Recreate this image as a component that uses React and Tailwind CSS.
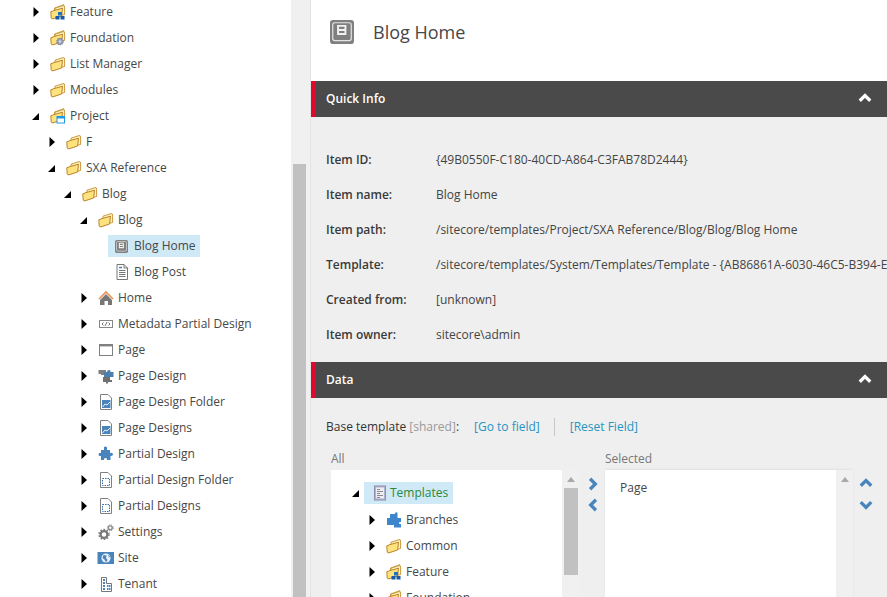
import React from "react";

const Right = () => (
  <svg width="6" height="10" viewBox="0 0 6 10" className="shrink-0"><path d="M0.5 0 L6 5 L0.5 10Z" fill="#000" /></svg>
);
const Down = () => (
  <svg width="7" height="7" viewBox="0 0 7 7" className="shrink-0"><path d="M7 0 V7 H0Z" fill="#000" /></svg>
);

const FolderBase = ({ children, back }) => (
  <svg width="16" height="16" viewBox="0 0 16 16" className="shrink-0">
    {back && <path d="M4.5 4 L8.5 2.6 V5 L4.5 6Z M9 2.4 L13.8 0.6 V6 H9Z" fill="#fdf0b4" stroke="#c08a2a" strokeWidth="0.8" />}
    <path d="M5 4.2 L13 1.6 Q14.6 1.4 14.6 3 V10.5 L5 13Z" fill="#fdf2c0" stroke="#c4902e" strokeWidth="0.9" />
    <path d="M0.8 7.8 L4 6.6 L12.5 4.2 L11.6 12 L3 14.8 Q1.4 15 1.2 14Z" fill="#fde27e" stroke="#bb842a" strokeWidth="1" />
    {children}
  </svg>
);
const Folder = () => <FolderBase />;
const FolderCubes = () => (
  <FolderBase back>
    <rect x="8" y="8" width="4" height="3.5" fill="#1f6fc4" />
    <rect x="5.5" y="12" width="4" height="3.5" fill="#155aa8" />
    <rect x="10.5" y="12" width="4" height="3.5" fill="#155aa8" />
  </FolderBase>
);
const FolderGear = () => (
  <FolderBase back>
    <circle cx="10" cy="11.5" r="3.2" fill="#9aa0b8" stroke="#7a8098" strokeWidth="1.2" strokeDasharray="1.2 0.8" />
    <circle cx="10" cy="11.5" r="1.2" fill="#d4d7e2" />
  </FolderBase>
);
const FolderWindow = () => (
  <FolderBase back>
    <rect x="7" y="8.5" width="7.5" height="6.5" fill="#fff" stroke="#1e9be8" strokeWidth="1" />
    <rect x="7" y="8.5" width="7.5" height="2" fill="#1e9be8" />
  </FolderBase>
);
const KeyB = ({ s = 13 }) => (
  <svg width={s} height={s} viewBox="0 0 14 14" className="shrink-0">
    <rect x="0" y="0" width="14" height="14" rx="1.8" fill="#808080" />
    <rect x="1.6" y="1.6" width="10.8" height="10.4" rx="1.2" fill="none" stroke="#e4e4e4" strokeWidth="0.7" />
    <path d="M4.7 3.4 H9 V8.2 H4.7Z M4.7 5.8 H9" fill="none" stroke="#f2f2f2" strokeWidth="1.1" />
  </svg>
);
const Doc = () => (
  <svg width="16" height="16" viewBox="0 0 16 16" className="shrink-0">
    <path d="M3 0.5 H10 L13.5 4 V15.5 H3Z" fill="#fff" stroke="#777" />
    <path d="M10 0.5 V4 H13.5" fill="none" stroke="#777" />
    <path d="M5 6.5 H11.5 M5 8.5 H11.5 M5 10.5 H11.5 M5 12.5 H11.5" stroke="#777" />
    <path d="M5 3.5 H8" stroke="#4a86c0" strokeWidth="1.6" />
  </svg>
);
const HomeI = () => (
  <svg width="16" height="16" viewBox="0 0 16 16" className="shrink-0">
    <path d="M8 4 L14 10 V15 H10 V11 H6.5 V15 H2 V10Z" fill="#777" />
    <path d="M1 9 L8 2 L15 9" fill="none" stroke="#e8945a" strokeWidth="1.7" />
  </svg>
);
const Meta = () => (
  <svg width="16" height="16" viewBox="0 0 16 16" className="shrink-0">
    <rect x="1.5" y="4.5" width="13" height="7" fill="#fff" stroke="#888" />
    <path d="M5.5 6.5 L4 8 L5.5 9.5 M10.5 6.5 L12 8 L10.5 9.5 M7 10 L9 6" fill="none" stroke="#666" strokeWidth="0.9" />
  </svg>
);
const PageI = () => (
  <svg width="16" height="16" viewBox="0 0 16 16" className="shrink-0">
    <rect x="1.5" y="2.5" width="13" height="11" fill="#fff" stroke="#808080" />
    <rect x="1" y="2" width="14" height="2.4" fill="#808080" />
  </svg>
);
const Puzzle = ({ c = "#4a84bd" }) => (
  <svg width="16" height="16" viewBox="0 0 16 16" className="shrink-0">
    <path d="M6 1 Q8 0 9 1.5 L9 4 H12 V7 Q14 6 15 8 Q15 10.5 12.5 10 L12.5 14 H9 Q9.5 12 7.5 12 Q5.5 12 6 14 H3 V10 Q0.5 10.5 0.5 8.2 Q1 6 3 7 V4 H6Z" fill={c} />
  </svg>
);
const PageDesign = () => (
  <svg width="16" height="16" viewBox="0 0 16 16" className="shrink-0">
    <path d="M0.5 2 H8 V4 H6 V7 H3 V6 H0.5Z" fill="#808080" />
    <path d="M6 4 H9 Q9 2 11 2 Q13 2 12.5 4 H15.5 V9 H6Z" fill="#4a7fb0" />
    <path d="M5 9 H12 V12 H14 V14 H10 V15.5 H8 V14 H5Z" fill="#707070" />
  </svg>
);
const Chart = () => (
  <svg width="16" height="16" viewBox="0 0 16 16" className="shrink-0">
    <path d="M2.5 0.5 H10 L13.5 4 V15.5 H2.5Z" fill="#fff" stroke="#808080" />
    <rect x="4" y="6" width="8.5" height="8" fill="#4a84bd" />
    <path d="M4.5 13 L7 10 L9 11 L12 8" fill="none" stroke="#fff" strokeWidth="0.9" />
  </svg>
);
const Dotted = () => (
  <svg width="16" height="16" viewBox="0 0 16 16" className="shrink-0">
    <path d="M2.5 0.5 H10 L13.5 4 V15.5 H2.5Z" fill="#fff" stroke="#808080" />
    <rect x="4.5" y="6.5" width="7" height="7" fill="none" stroke="#2f6fb0" strokeDasharray="1.5 1" />
  </svg>
);
const Gears = () => (
  <svg width="16" height="16" viewBox="0 0 16 16" className="shrink-0">
    <circle cx="6" cy="10.5" r="3.4" fill="none" stroke="#777" strokeWidth="2.2" />
    <circle cx="6" cy="10.5" r="5" fill="none" stroke="#777" strokeWidth="1.4" strokeDasharray="1.6 1.6" />
    <circle cx="12.3" cy="3.8" r="1.9" fill="none" stroke="#8a8a8a" strokeWidth="1.4" />
    <circle cx="12.3" cy="3.8" r="3" fill="none" stroke="#8a8a8a" strokeWidth="1" strokeDasharray="1.2 1.2" />
  </svg>
);
const Site = () => (
  <svg width="16" height="16" viewBox="0 0 16 16" className="shrink-0 overflow-visible">
    <rect x="-0.5" y="2" width="16.5" height="12" fill="#4a84bd" />
    <circle cx="8" cy="8" r="4.6" fill="#e8f0f8" />
    <path d="M5.5 5 L8.5 5.5 L8 8 L9.5 10 L8 12.2 L6.5 9.5 L4.5 8Z M10 4.5 L12 6.5 L11 7.5Z" fill="#4a84bd" />
  </svg>
);
const Tenant = () => (
  <svg width="16" height="16" viewBox="0 0 16 16" className="shrink-0">
    <path d="M3.5 1.5 H8.5 V7.5 H13.5 V15.5 H3.5Z" fill="#fff" stroke="#777" />
    <rect x="5" y="3" width="2" height="2" fill="#4a84bd" />
    <rect x="5" y="6" width="2" height="2" fill="#4a84bd" />
    <rect x="5" y="9" width="2" height="2" fill="#4a84bd" />
    <rect x="5" y="12" width="2" height="2" fill="#4a84bd" />
    <rect x="9" y="9" width="1.5" height="2" fill="#4a84bd" />
    <rect x="11" y="9" width="1.5" height="2" fill="#4a84bd" />
    <rect x="9" y="12" width="1.5" height="2" fill="#4a84bd" />
    <rect x="11" y="12" width="1.5" height="2" fill="#4a84bd" />
  </svg>
);
const TemplatesI = () => (
  <svg width="16" height="16" viewBox="0 0 16 16" className="shrink-0">
    <rect x="2.5" y="1" width="11" height="14" fill="#b3b3cf" stroke="#8e8eb0" />
    <rect x="4" y="2.5" width="8" height="11" fill="#ececf2" />
    <path d="M5 4.5 H8 M5 6.5 H11 M5 8.5 H8 M5 10.5 H11 M5 12.5 H8" stroke="#8a8a8a" />
  </svg>
);
const Branches = () => (
  <svg width="16" height="16" viewBox="0 0 16 16" className="shrink-0">
    <path d="M4 2 H9 Q8.5 0.2 10.5 0.2 Q12 0.5 11.5 2 V6 H15 V10 Q13 9.5 13 11 Q13 12.5 15 12 V15.5 H8 V13 H1 V6 H4Z" fill="#3e86cc" />
  </svg>
);

const Row = ({ open, leaf, icon, label, children, selected }) => (
  <li>
    <div className="flex h-[26px] items-center">
      <span className="flex w-4 shrink-0 items-center justify-center pr-[1px]">{leaf ? null : open ? <Down /> : <Right />}</span>
      {selected ? (
        <span className="flex h-[22px] items-center bg-[#d0e9f6] pl-[7px] pr-[4px]">
          {icon}
          <span className="ml-[6px] text-[12px]">{label}</span>
        </span>
      ) : (
        <>
          <span className="ml-[6px] flex w-[16px] shrink-0 justify-center">{icon}</span>
          <span className="ml-[4px] whitespace-nowrap text-[12px]">{label}</span>
        </>
      )}
    </div>
    {children && <ul className="pl-4">{children}</ul>}
  </li>
);

const Chevron = ({ dir, className, color = "#4a84bd", s = 14 }) => {
  const d = {
    up: "M1.5 7.5 L6 3 L10.5 7.5",
    down: "M1.5 3.5 L6 8 L10.5 3.5",
    right: "M3.5 1.5 L8 6 L3.5 10.5",
    left: "M8.5 1.5 L4 6 L8.5 10.5",
  }[dir];
  return (
    <svg width={s} height={s} viewBox="0 0 12 12" className={className}>
      <path d={d} fill="none" stroke={color} strokeWidth="2.8" />
    </svg>
  );
};

const SectionHead = ({ title }) => (
  <div className="flex h-9 items-center justify-between border-l-[5px] border-[#dc0a2d] bg-[#4a4a4a] pl-[10px] pr-[15px]">
    <span className="text-[12px] font-semibold text-white">{title}</span>
    <Chevron dir="up" color="#ffffff" />
  </div>
);

const infos = [
  ["Item ID:", "{49B0550F-C180-40CD-A864-C3FAB78D2444}"],
  ["Item name:", "Blog Home"],
  ["Item path:", "/sitecore/templates/Project/SXA Reference/Blog/Blog/Blog Home"],
  ["Template:", "/sitecore/templates/System/Templates/Template - {AB86861A-6030-46C5-B394-E8F99E8B87DB}"],
  ["Created from:", "[unknown]"],
  ["Item owner:", "sitecore\\admin"],
];

const ScrollUp = () => (
  <svg width="8" height="5" viewBox="0 0 8 5"><path d="M4 0 L8 5 H0Z" fill="#a8a8a8" /></svg>
);

export default function App() {
  return (
    <div className="flex h-[597px] w-[887px] overflow-hidden bg-white font-['Open_Sans',sans-serif] text-[#474747]">
      <div className="w-[291px] shrink-0 overflow-hidden">
        <ul className="-mt-px pl-7">
          <Row icon={<FolderCubes />} label="Feature" />
          <Row icon={<FolderGear />} label="Foundation" />
          <Row icon={<Folder />} label="List Manager" />
          <Row icon={<Folder />} label="Modules" />
          <Row open icon={<FolderWindow />} label="Project">
            <Row icon={<Folder />} label="F" />
            <Row open icon={<Folder />} label="SXA Reference">
              <Row open icon={<Folder />} label="Blog">
                <Row open icon={<Folder />} label="Blog">
                  <Row leaf selected icon={<KeyB />} label="Blog Home" />
                  <Row leaf icon={<Doc />} label="Blog Post" />
                </Row>
                <Row icon={<HomeI />} label="Home" />
                <Row icon={<Meta />} label="Metadata Partial Design" />
                <Row icon={<PageI />} label="Page" />
                <Row icon={<PageDesign />} label="Page Design" />
                <Row icon={<Chart />} label="Page Design Folder" />
                <Row icon={<Chart />} label="Page Designs" />
                <Row icon={<Puzzle />} label="Partial Design" />
                <Row icon={<Dotted />} label="Partial Design Folder" />
                <Row icon={<Dotted />} label="Partial Designs" />
                <Row icon={<Gears />} label="Settings" />
                <Row icon={<Site />} label="Site" />
                <Row icon={<Tenant />} label="Tenant" />
              </Row>
            </Row>
          </Row>
        </ul>
      </div>

      <div className="w-[19px] shrink-0 bg-[#f0f0f0] pl-[2px] pr-1 pt-[164px]">
        <div className="h-full bg-[#c1c1c1]" />
      </div>

      <div className="min-w-0 flex-1 border-l border-[#e3e3e3]">
        <div className="flex h-[81px] items-start pl-[19px] pt-[20px]">
          <KeyB s={24} />
          <span className="ml-[19px] text-[18px] leading-[25px] text-[#474747]">Blog Home</span>
        </div>

        <SectionHead title="Quick Info" />
        <div className="bg-[#efefef] pb-[10px] pl-[15px] pt-[25px]">
          {infos.map(([k, v]) => (
            <div key={k} className="flex h-[35px] items-center text-[12px]">
              <span className="w-[110px] shrink-0 font-semibold text-[#3a3a3a]">{k}</span>
              <span className="whitespace-nowrap text-[#444]">{v}</span>
            </div>
          ))}
        </div>

        <SectionHead title="Data" />
        <div className="h-[240px] bg-[#efefef] pl-[15px] pt-[19px]">
          <div className="flex h-5 items-center text-[12px] text-[#333]">
            <span>Base template <span className="text-[#999]">[shared]</span>:</span>
            <span className="ml-[15px] text-[#2694c0]">[Go to field]</span>
            <span className="ml-[14px] mr-[15px] h-[18px] w-px bg-[#c8c8c8]" />
            <span className="text-[#2694c0]">[Reset Field]</span>
          </div>
          <div className="mt-3 flex pl-[5px]">
            <div className="w-[249px] shrink-0">
              <div className="h-[21px] text-[12px] leading-5 text-[#777]">All</div>
              <div className="flex h-[300px] bg-white">
                <div className="min-w-0 flex-1 overflow-hidden pl-[21px] pt-[12px]">
                  <div className="flex h-[22px] items-center">
                    <Down />
                    <span className="ml-[5px] flex h-[22px] items-center bg-[#d0e9f6] pl-[8px] pr-[5px]">
                      <TemplatesI />
                      <span className="ml-[2px] text-[12px] text-[#2a8a3a]">Templates</span>
                    </span>
                  </div>
                  <ul className="mt-[3px] pl-[12px]">
                    <Row icon={<Branches />} label="Branches" />
                    <Row icon={<Folder />} label="Common" />
                    <Row icon={<FolderCubes />} label="Feature" />
                    <Row icon={<FolderGear />} label="Foundation" />
                  </ul>
                </div>
                <div className="w-[18px] shrink-0 bg-[#f0f0f0] px-[2px]">
                  <div className="flex h-[18px] items-center justify-center"><ScrollUp /></div>
                  <div className="h-[87px] bg-[#c1c1c1]" />
                </div>
              </div>
            </div>
            <div className="flex w-[25px] shrink-0 flex-col items-center pt-[28px]">
              <Chevron dir="right" />
              <Chevron dir="left" className="mt-[7px]" />
            </div>
            <div className="w-[248px] shrink-0">
              <div className="h-[21px] text-[12px] leading-5 text-[#777]">Selected</div>
              <div className="flex h-[300px] bg-white shadow-[0_-1px_2px_rgba(0,0,0,0.06)]">
                <div className="min-w-0 flex-1 pl-[15px] pt-[9px] text-[12px]">Page</div>
                <div className="flex h-full w-[17px] shrink-0 justify-center bg-[#f0f0f0] pt-[7px]"><ScrollUp /></div>
              </div>
            </div>
            <div className="flex w-[25px] shrink-0 flex-col items-center pt-[28px]">
              <Chevron dir="up" />
              <Chevron dir="down" className="mt-[7px]" />
            </div>
          </div>
        </div>
      </div>
    </div>
  );
}
